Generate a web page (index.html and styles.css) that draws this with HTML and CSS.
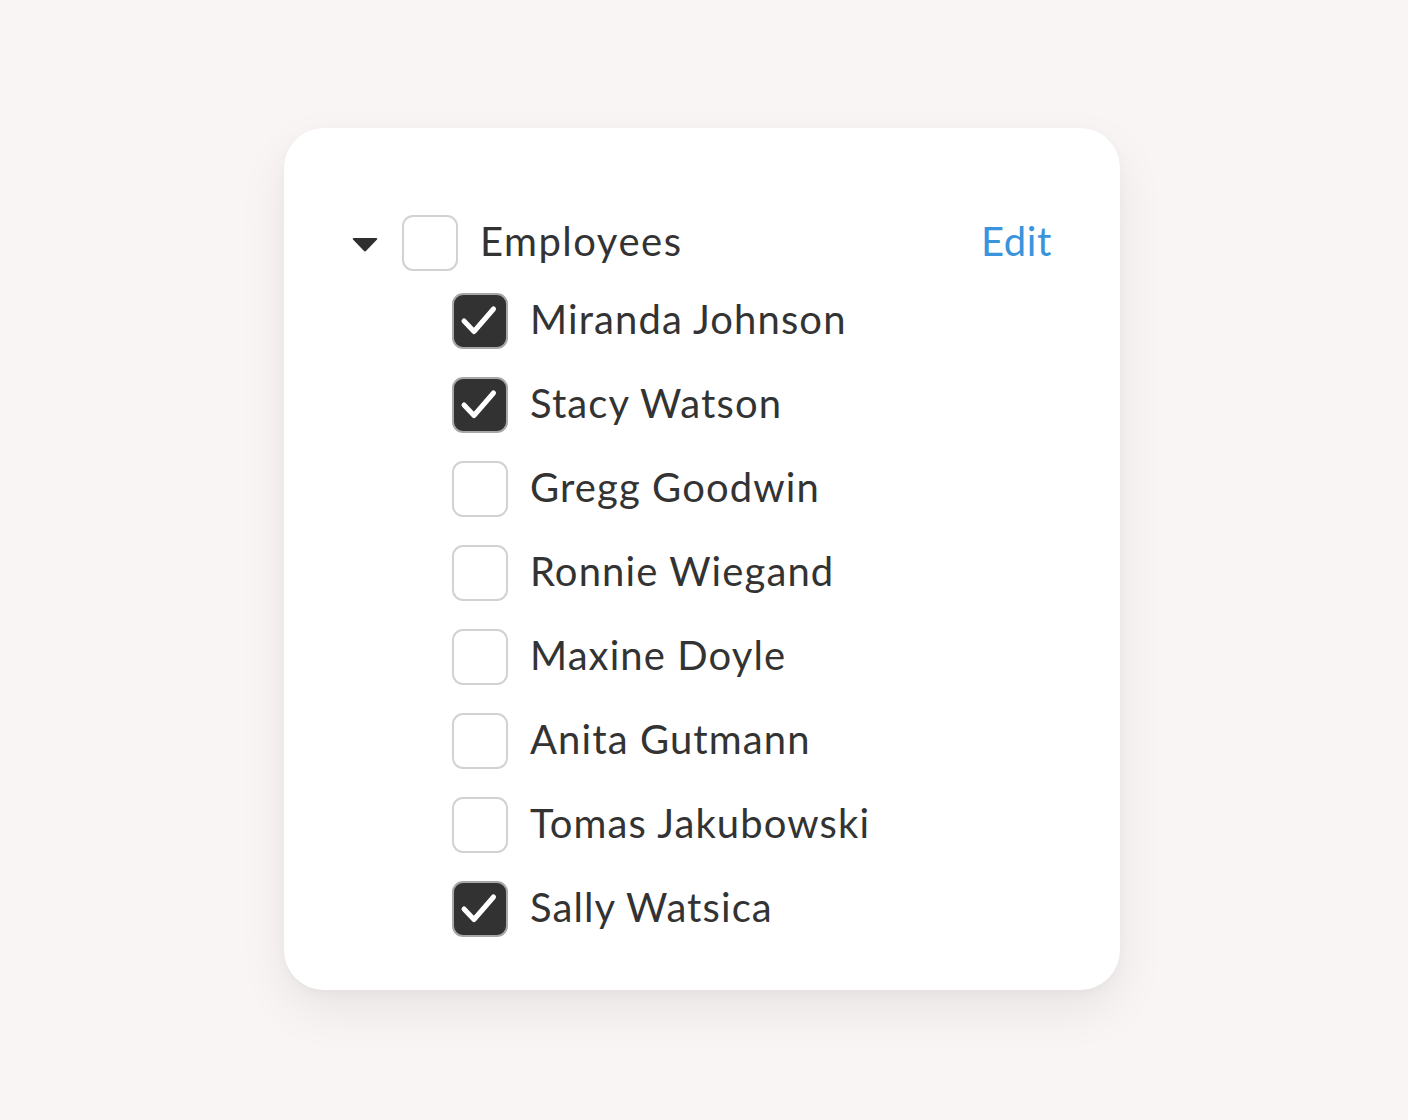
FILE: index.html
```html
<!DOCTYPE html>
<html>
<head>
<meta charset="utf-8">
<link rel="stylesheet" href="styles.css">
</head>
<body>
<div class="page">
  <div class="card">
    <div class="header">
      <svg class="caret" width="26" height="14" viewBox="0 0 26 14"><path d="M1 1.5 Q0 0 2 0 H24 Q26 0 25 1.5 L14.2 12.8 Q13 14 11.8 12.8 Z" fill="#2f2f2f"/></svg>
      <span class="box"></span>
      <span class="label">Employees</span>
      <a class="edit">Edit</a>
    </div>
    <ul class="list">
      <li class="row"><span class="box checked"><svg viewBox="0 0 52 52"><path d="M10 26 L20 36.5 L39.5 14" fill="none" stroke="#fff" stroke-width="5" stroke-linecap="round" stroke-linejoin="round"/></svg></span><span class="label">Miranda Johnson</span></li>
      <li class="row"><span class="box checked"><svg viewBox="0 0 52 52"><path d="M10 26 L20 36.5 L39.5 14" fill="none" stroke="#fff" stroke-width="5" stroke-linecap="round" stroke-linejoin="round"/></svg></span><span class="label">Stacy Watson</span></li>
      <li class="row"><span class="box"></span><span class="label">Gregg Goodwin</span></li>
      <li class="row"><span class="box"></span><span class="label">Ronnie Wiegand</span></li>
      <li class="row"><span class="box"></span><span class="label">Maxine Doyle</span></li>
      <li class="row"><span class="box"></span><span class="label">Anita Gutmann</span></li>
      <li class="row"><span class="box"></span><span class="label">Tomas Jakubowski</span></li>
      <li class="row"><span class="box checked"><svg viewBox="0 0 52 52"><path d="M10 26 L20 36.5 L39.5 14" fill="none" stroke="#fff" stroke-width="5" stroke-linecap="round" stroke-linejoin="round"/></svg></span><span class="label">Sally Watsica</span></li>
    </ul>
  </div>
</div>
</body>
</html>
```

FILE: styles.css
```css
* { box-sizing: border-box; }
html, body { margin: 0; padding: 0; }
body {
  background: #f8f5f4;
  font-family: Lato, "Open Sans", sans-serif;
  color: #333333;
}
.page {
  width: 1408px;
  height: 1120px;
  padding-top: 128px;
  padding-left: 284px;
}
.card {
  width: 836px;
  height: 862px;
  background: #ffffff;
  border-radius: 40px;
  box-shadow: 0 20px 50px rgba(0, 0, 0, 0.07), 0 4px 12px rgba(0, 0, 0, 0.03);
  padding: 87px 68px 0 68px;
}
.header {
  display: flex;
  align-items: center;
  height: 56px;
}
.caret {
  margin-right: 24px;
  margin-top: 4px;
}
.box {
  width: 56px;
  height: 56px;
  border: 2px solid #d2d2d2;
  border-radius: 11px;
  flex: none;
  display: flex;
  align-items: center;
  justify-content: center;
  background: #fff;
}
.box.checked {
  background: #323232;
  border-color: #a8a8a8;
}
.box svg { width: 52px; height: 52px; display: block; }
.label {
  margin-left: 22px;
  font-size: 40px;
  line-height: 56px;
  padding-bottom: 5px;
  color: #333;
  letter-spacing: 1.1px;
}
.header .label { letter-spacing: 1.5px; }
.edit {
  margin-left: auto;
  font-size: 40px;
  line-height: 56px;
  padding-bottom: 5px;
  color: #3a94dc;
  letter-spacing: 0.6px;
}
.list {
  list-style: none;
  margin: 22px 0 0 0;
  padding: 0 0 0 100px;
  display: flex;
  flex-direction: column;
  gap: 28px;
}
.row {
  display: flex;
  align-items: center;
  height: 56px;
}
```
